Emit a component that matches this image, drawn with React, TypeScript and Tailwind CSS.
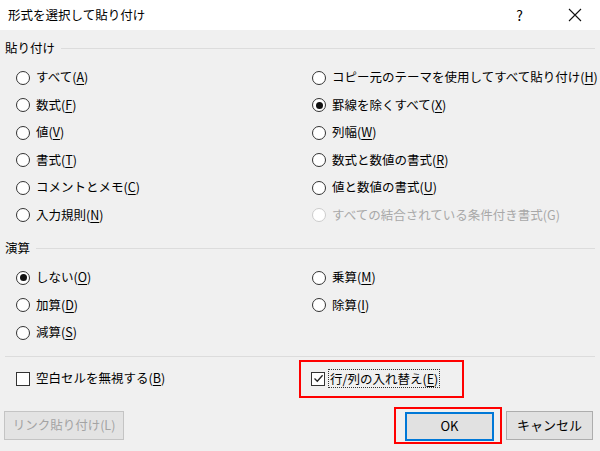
import React from "react";

type Opt = { text: string; k: string; selected?: boolean; disabled?: boolean };

const pasteLeft: Opt[] = [
  { text: "すべて", k: "A" },
  { text: "数式", k: "F" },
  { text: "値", k: "V" },
  { text: "書式", k: "T" },
  { text: "コメントとメモ", k: "C" },
  { text: "入力規則", k: "N" },
];

const pasteRight: Opt[] = [
  { text: "コピー元のテーマを使用してすべて貼り付け", k: "H" },
  { text: "罫線を除くすべて", k: "X", selected: true },
  { text: "列幅", k: "W" },
  { text: "数式と数値の書式", k: "R" },
  { text: "値と数値の書式", k: "U" },
  { text: "すべての結合されている条件付き書式", k: "G", disabled: true },
];

const opLeft: Opt[] = [
  { text: "しない", k: "O", selected: true },
  { text: "加算", k: "D" },
  { text: "減算", k: "S" },
];

const opRight: Opt[] = [
  { text: "乗算", k: "M" },
  { text: "除算", k: "I" },
];

function Radio({ opt }: { opt: Opt }) {
  return (
    <div className="h-[27.5px] flex items-center">
      <span
        className={`w-[14px] h-[14px] rounded-full border bg-white flex items-center justify-center ${
          opt.disabled ? "border-[#cccccc]" : "border-[#333333]"
        }`}
      >
        {opt.selected && <span className="w-[7px] h-[7px] rounded-full bg-[#111111]" />}
      </span>
      <span className={`ml-[6px] whitespace-nowrap ${opt.disabled ? "text-[#a8a8a8]" : "text-black"}`}>
        {opt.text}(
        {opt.disabled ? opt.k : <span className="underline underline-offset-2">{opt.k}</span>})
      </span>
    </div>
  );
}

function Section({ title }: { title: string }) {
  return (
    <div className="h-[20px] flex items-center">
      <span className="whitespace-nowrap">{title}</span>
      <div className="flex-1 h-px bg-[#dcdcdc] ml-[6px]" />
    </div>
  );
}

function Check({ checked }: { checked?: boolean }) {
  return (
    <span className="w-[14px] h-[14px] border border-[#333333] bg-white flex items-center justify-center shrink-0">
      {checked && (
        <svg width="11" height="11" viewBox="0 0 11 11">
          <path d="M1.5 5.5 L4.3 8.3 L9.6 2.2" fill="none" stroke="#222" strokeWidth="1.3" />
        </svg>
      )}
    </span>
  );
}

export default function App() {
  return (
    <div
      className="w-[600px] h-[451px] bg-[#f0f0f0] text-[12.5px] text-black overflow-hidden flex flex-col"
      style={{ fontFamily: '"Noto Sans CJK JP", "Noto Sans", sans-serif' }}
    >
      {/* --- Title bar --- */}
      <div className="h-[30px] bg-white flex items-center pl-[8px] shrink-0">
        <span className="text-[12.5px]">形式を選択して貼り付け</span>
        <span className="ml-auto text-[14px] mr-[45px]">?</span>
        <svg width="14" height="14" viewBox="0 0 14 14" className="mr-[18px]">
          <path d="M1 1 L13 13 M13 1 L1 13" stroke="#111" strokeWidth="1.1" />
        </svg>
      </div>

      <div className="px-[5px] pt-[8px] flex flex-col">
        {/* --- Paste --- */}
        <Section title="貼り付け" />
        <div className="grid grid-cols-[296px_1fr] pl-[11px] pt-[6px]">
          <div className="flex flex-col">
            {pasteLeft.map((o) => (
              <Radio key={o.k} opt={o} />
            ))}
          </div>
          <div className="flex flex-col">
            {pasteRight.map((o) => (
              <Radio key={o.k} opt={o} />
            ))}
          </div>
        </div>

        {/* --- Operation --- */}
        <div className="mt-[9px]">
          <Section title="演算" />
        </div>
        <div className="grid grid-cols-[296px_1fr] pl-[11px] pt-[6px]">
          <div className="flex flex-col">
            {opLeft.map((o) => (
              <Radio key={o.k} opt={o} />
            ))}
          </div>
          <div className="flex flex-col">
            {opRight.map((o) => (
              <Radio key={o.k} opt={o} />
            ))}
          </div>
        </div>

        <div className="h-px bg-[#dcdcdc] mt-[9px]" />

        {/* --- Checkboxes --- */}
        <div className="flex items-center mt-[3px] pl-[11px]">
          <div className="w-[283px] flex items-center">
            <Check />
            <span className="ml-[6px] whitespace-nowrap">
              空白セルを無視する(<span className="underline underline-offset-2">B</span>)
            </span>
          </div>
          <div className="w-[165px] h-[38px] border-2 border-[#ff0000] flex items-center pl-[10px]">
            <Check checked />
            <span className="ml-[3px] px-[1px] border border-dotted border-[#333333] whitespace-nowrap leading-[17px]">
              行/列の入れ替え(<span className="underline underline-offset-2">E</span>)
            </span>
          </div>
        </div>

        {/* --- Buttons --- */}
        <div className="flex items-center mt-[9px] pl-[-1px]">
          <div className="w-[120px] h-[29px] -ml-px border border-[#c4c4c4] bg-[#e3e3e3] text-[#a3a3a3] flex items-center justify-center whitespace-nowrap">
            リンク貼り付け(L)
          </div>
          <div className="ml-auto border-2 border-[#ff0000] pl-[9px] pr-[6px] pt-[3px] pb-[1px]">
            <div className="w-[89px] h-[29px] border-2 border-[#0078d7] bg-[#e1e1e1] flex items-center justify-center text-[13px]">
              OK
            </div>
          </div>
          <div className="ml-[4px] mr-[2px] w-[87px] h-[29px] border border-[#adadad] bg-[#e1e1e1] flex items-center justify-center text-[13px]">
            キャンセル
          </div>
        </div>
      </div>
    </div>
  );
}
